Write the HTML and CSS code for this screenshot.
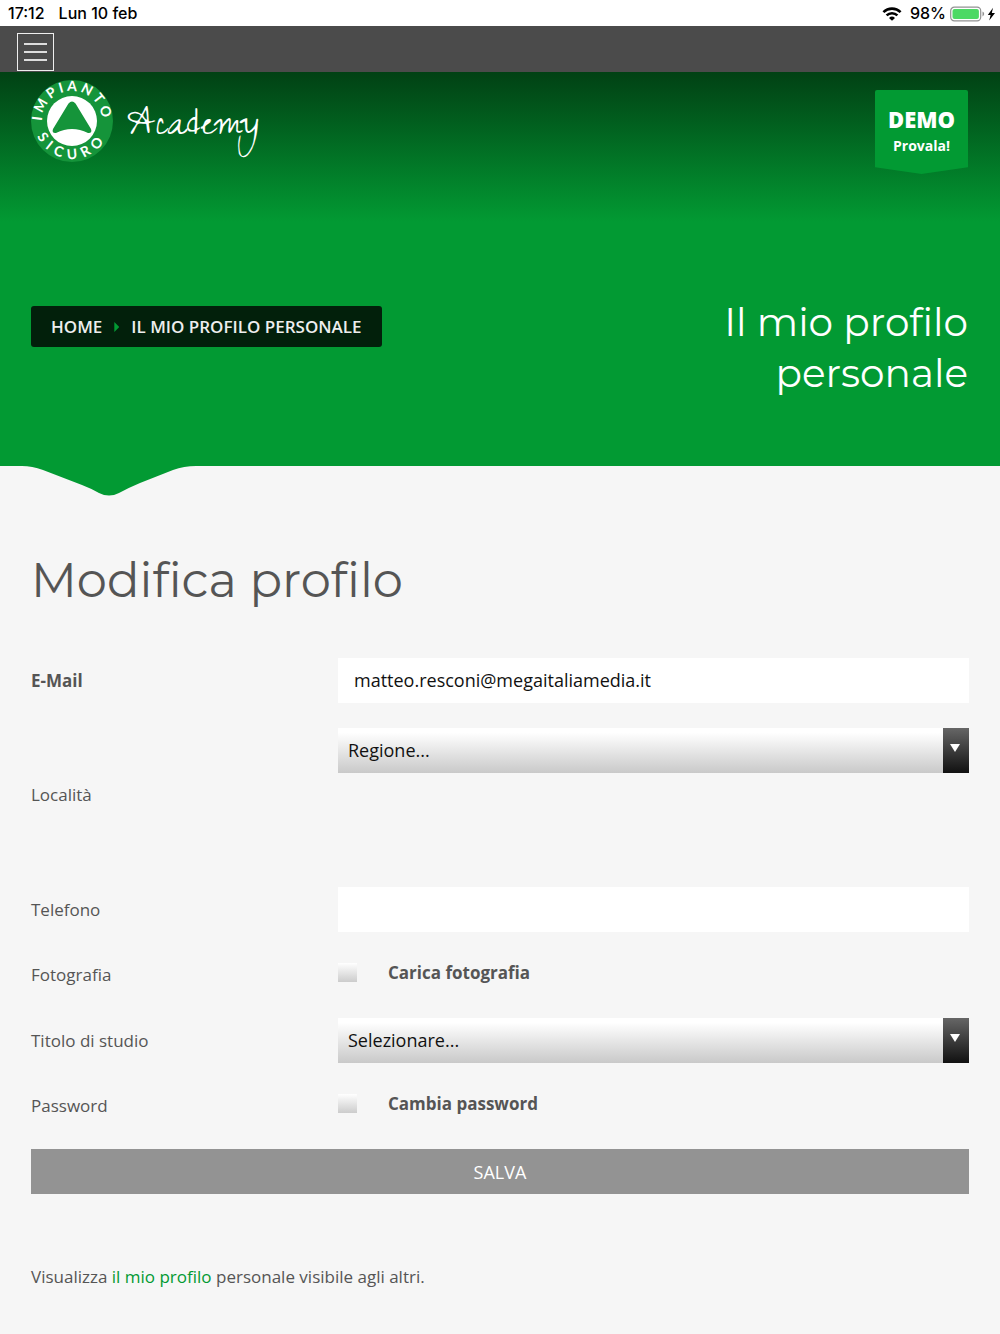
FILE: index.html
```html
<!DOCTYPE html>
<html lang="it">
<head>
<meta charset="utf-8">
<meta name="viewport" content="width=device-width, initial-scale=1">
<title>Il mio profilo personale</title>
<link rel="stylesheet" href="styles.css">
</head>
<body>
<div class="status">
  <div class="status-group status-time"><span>17:12</span><span>Lun 10 feb</span></div>
  <div class="status-group">
    <svg class="wifi" width="20" height="14" viewBox="0 0 20 14" aria-hidden="true">
      <g fill="none" stroke="#000" stroke-width="2.6">
        <path d="M1.4 5.1a12.4 12.4 0 0 1 17.2 0"/>
        <path d="M4.6 8.4a7.8 7.8 0 0 1 10.8 0"/>
      </g>
      <path d="M7 10.900a4.400 4.400 0 0 1 6 0L10 13.800z"/>
    </svg>
    <span>98%</span>
    <svg width="46" height="16" viewBox="0 0 46 16" aria-hidden="true">
      <rect x=".7" y="1.2" width="30" height="13.6" rx="3.6" fill="none" stroke="#929292" stroke-width="1.2"/>
      <rect x="2.5" y="3" width="26.4" height="10" rx="2" fill="#4cd964"/>
      <path d="M32.5 5.600c2.200.9 2.200 3.900 0 4.800z" fill="#929292"/>
      <path d="M43 1.800 37.800 9h2.800l-1.400 5.400L45 7h-3.200z"/>
    </svg>
  </div>
</div>
<nav class="menubar">
  <button class="menu-button" type="button" aria-label="Menu"><span></span><span></span><span></span></button>
</nav>
<header class="hero">
  <div class="hero-top">
    <a class="brand" href="#">
      <svg class="badge" width="82" height="82" viewBox="0 0 82 82" role="img" aria-label="Impianto Sicuro">
        <defs>
          <path id="arc-top" d="M13.200 52.200A30 30 0 1 1 68.800 52.200"/>
          <path id="arc-bottom" d="M4.600 31a37.800 37.800 0 1 0 72.800 0"/>
        </defs>
        <circle cx="41" cy="41" r="41" fill="#15943a"/>
        <circle cx="41" cy="41" r="25" fill="#fff"/>
        <path d="M37.500 23.500q3.500-4 7 0L60 49q1.500 4.500-3 4-16-8-32 0-4.500.5-3-4z" fill="#15943a"/>
        <text class="ring ring-top"><textPath href="#arc-top" startOffset="50%">IMPIANTO</textPath></text>
        <text class="ring ring-bottom"><textPath href="#arc-bottom" startOffset="50%">SICURO</textPath></text>
      </svg>
      <span class="brand-name">Academy</span>
    </a>
    <a class="demo" href="#"><strong>DEMO</strong><span>Provala!</span></a>
  </div>
  <div class="hero-title">
    <ol class="crumbs">
      <li><a href="#">HOME</a></li>
      <li>IL MIO PROFILO PERSONALE</li>
    </ol>
    <h1>Il mio profilo personale</h1>
  </div>
  <svg class="notch" width="200" height="31" viewBox="0 0 200 31" aria-hidden="true">
    <path d="M0 0V1H22Q32 1 43 5L82 20Q90 23 99 28Q109 33 119 28Q128 23 140 18L173 5Q184 1 196 1H200V0z" fill="#029a33"/>
  </svg>
</header>
<main>
  <h2>Modifica profilo</h2>
  <form>
    <div class="row">
      <label class="required" for="email">E-Mail</label>
      <input id="email" class="field" type="email" value="matteo.resconi@megaitaliamedia.it">
    </div>
    <div class="row row-place">
      <label for="regione">Località</label>
      <div class="select"><select id="regione"><option>Regione...</option></select></div>
    </div>
    <div class="row">
      <label for="telefono">Telefono</label>
      <input id="telefono" class="field" type="tel">
    </div>
    <div class="row row-check">
      <span>Fotografia</span>
      <label class="check"><input type="checkbox">Carica fotografia</label>
    </div>
    <div class="row">
      <label for="titolo">Titolo di studio</label>
      <div class="select"><select id="titolo"><option>Selezionare...</option></select></div>
    </div>
    <div class="row row-check">
      <span>Password</span>
      <label class="check"><input type="checkbox">Cambia password</label>
    </div>
    <button class="save" type="submit">SALVA</button>
  </form>
  <p class="note">Visualizza <a href="#">il mio profilo</a> personale visibile agli altri.</p>
</main>
</body>
</html>
```
FILE: styles.css
```css
* {
  box-sizing: border-box;
}

body {
  margin: 0;
  background: #f6f6f6;
  color: #555;
  font: 17px/24px "Open Sans", "Noto Sans", sans-serif;
}

a {
  color: #029a33;
  text-decoration: none;
}

/* device status line */
.status {
  display: flex;
  justify-content: space-between;
  height: 26px;
  padding: 1px 4px 0 8px;
  background: #fff;
  color: #000;
  font: 500 16px/25px Inter, "Liberation Sans", sans-serif;
}

.status-group {
  display: flex;
  align-items: center;
  gap: 4px;
}

.status-time {
  gap: 14px;
}

.wifi {
  margin-right: 4px;
}

.menubar {
  height: 46px;
  padding: 7px 17px;
  background: #4b4b4b;
}

.menu-button {
  display: flex;
  flex-direction: column;
  align-items: center;
  justify-content: center;
  gap: 6px;
  width: 37px;
  height: 38px;
  padding: 0;
  border: 1px solid #eee;
  background: none;
}

.menu-button span {
  width: 23px;
  height: 2px;
  background: #ddd;
}

/* green banner */
.hero {
  position: relative;
  padding: 8px 32px 67px 31px;
  background: linear-gradient(#014114, #029a33 150px);
}

.hero-top {
  display: flex;
  align-items: flex-start;
  justify-content: space-between;
}

.brand {
  display: flex;
  align-items: center;
  gap: 14px;
  color: #fff;
}

.badge {
  overflow: visible;
}

.brand-name {
  padding-top: 16px;
  font: 44px/60px Zeyada, "Over the Rainbow", Caveat, "Dancing Script", Lato, cursive;
}

.ring {
  fill: #fff;
  font: 700 14px Lato, sans-serif;
  text-anchor: middle;
}

.ring-top {
  letter-spacing: 3px;
}

.ring-bottom {
  letter-spacing: 6px;
}

.demo {
  display: flex;
  flex-direction: column;
  align-items: center;
  width: 93px;
  height: 84px;
  margin-top: 10px;
  padding-top: 16px;
  border-radius: 2px 2px 0 0;
  background: #029a33;
  clip-path: polygon(0 0, 100% 0, 100% 92%, 50% 100%, 0 92%);
  color: #fff;
  font-size: 14px;
  font-weight: 700;
}

.demo strong {
  font-size: 22px;
  font-weight: 800;
  line-height: 26px;
}

.demo span {
  line-height: 28px;
}

.hero-title {
  display: flex;
  align-items: flex-start;
  justify-content: space-between;
  margin-top: 123px;
}

.crumbs {
  display: flex;
  gap: 12px;
  margin: 9px 0 0;
  padding: 9px 20px 8px;
  border-radius: 3px;
  background: #02200b;
  color: #eee;
  font-weight: 600;
  list-style: none;
}

.crumbs li {
  display: flex;
  align-items: center;
  gap: 12px;
}

.crumbs a {
  color: inherit;
}

.crumbs li + li::before {
  width: 5px;
  height: 10px;
  background: #029a33;
  clip-path: polygon(0 0, 100% 50%, 0 100%);
  content: "";
}

h1,
h2 {
  font-family: Montserrat, Inter, sans-serif;
  font-variant-ligatures: none;
  font-weight: 400;
}

h1 {
  max-width: 300px;
  margin: 0;
  color: #fff;
  font-size: 39px;
  line-height: 51px;
  text-align: right;
}

.notch {
  position: absolute;
  top: 100%;
  left: 0;
  margin-top: -1px;
}

/* profile form */
main {
  padding: 80px 31px 45px;
}

h2 {
  margin: 0 0 44px;
  font-size: 48px;
  line-height: 68px;
}

.row {
  display: grid;
  grid-template-columns: 307px 1fr;
  align-items: center;
  min-height: 45px;
  margin-bottom: 25px;
}

.required {
  font-weight: 700;
}

.field,
.select select {
  width: 100%;
  height: 45px;
  border: 0;
  border-radius: 0;
  background: #fff;
  color: #111;
  font: 18px/24px "Open Sans", "Noto Sans", sans-serif;
}

.field {
  padding: 0 16px 2px;
}

.select {
  position: relative;
}

.select select {
  display: block;
  padding: 0 36px 2px 10px;
  appearance: none;
  background: linear-gradient(#fff 10%, #c9c9c9);
}

.select::before,
.select::after {
  position: absolute;
  content: "";
  pointer-events: none;
}

.select::before {
  top: 0;
  right: 0;
  width: 26px;
  height: 45px;
  background: linear-gradient(#666, #111);
}

.select::after {
  top: 16px;
  right: 9px;
  width: 10px;
  height: 8px;
  background: #fff;
  clip-path: polygon(0 0, 100% 0, 50% 100%);
}

.row-place {
  height: 134px;
}

.row-place .select {
  align-self: start;
}

.row-check {
  min-height: 36px;
}

.check {
  display: flex;
  align-items: center;
  gap: 31px;
  padding-bottom: 5px;
  font-weight: 700;
}

.check input {
  width: 19px;
  height: 19px;
  margin: 0;
  appearance: none;
  background: linear-gradient(#fff, #ccc);
}

.save {
  display: block;
  width: 100%;
  height: 45px;
  border: 0;
  background: #939393;
  color: #fff;
  font: 18px/24px "Open Sans", "Noto Sans", sans-serif;
}

.note {
  margin: 71px 0 0;
}
```
